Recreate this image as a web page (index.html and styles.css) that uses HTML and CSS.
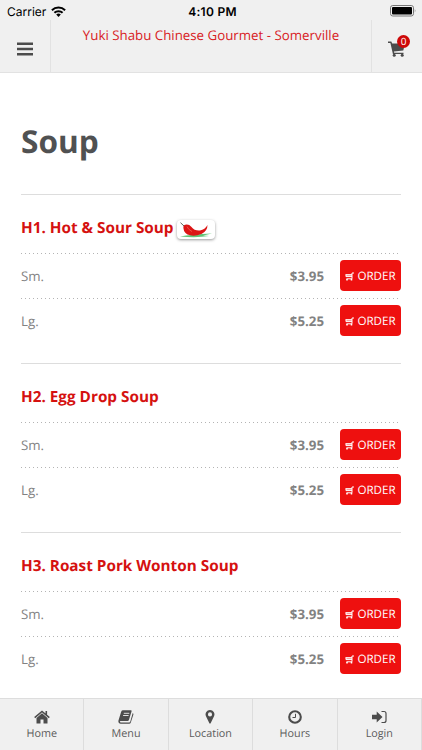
FILE: index.html
```html
<!DOCTYPE html>
<html lang="en">
<head>
<meta charset="utf-8">
<title>Yuki Shabu Chinese Gourmet - Somerville</title>
<link rel="stylesheet" href="styles.css">
</head>
<body>
<svg width="0" height="0" class="defs">
  <symbol id="cart" viewBox="0 0 18 16"><path fill="currentColor" d="M0 .5h3.3l.9 2H17L15.3 9.4 5.900 10.500l.3 1.200h9.300v1.300H4.900L2.400 1.900H0z"/><circle cx="6.200" cy="14.300" r="1.500" fill="currentColor"/><circle cx="14.200" cy="14.300" r="1.500" fill="currentColor"/></symbol>
  <symbol id="mini" viewBox="0 0 9 9"><path fill="none" stroke="currentColor" stroke-width="1" d="M9 1H7v5.800H1.500M.5 2.700H7M1 4.600h6M1 2.700v2"/><path fill="currentColor" opacity=".5" d="M1 2.500h6v2.300H1z"/><circle cx="2" cy="7.700" r=".9" fill="currentColor"/><circle cx="6.500" cy="7.700" r=".9" fill="currentColor"/></symbol>
</svg>
<div class="screen">
  <header class="top">
    <div class="status">
      <div class="carrier">Carrier
        <svg width="15" height="11" viewBox="0 0 15 11"><g fill="none" stroke="#000" stroke-width="2"><path d="M.9 4.2a9.5 9.5 0 0 1 13.2 0"/><path d="M3.4 6.8a5.9 5.9 0 0 1 8.2 0"/></g><path d="M5.2 8.5a3.3 3.3 0 0 1 4.6 0L7.5 10.9z"/></svg>
      </div>
      <div class="time">4:10 PM</div>
      <svg class="battery" width="27" height="12" viewBox="0 0 27 12"><rect x=".5" y=".5" width="23" height="10.5" rx="2.3" fill="none" stroke="#777"/><rect x="2" y="2" width="20" height="7.5" rx="1"/><path d="M24.8 4q1.3 1.7 0 3.5z" fill="#777"/></svg>
    </div>
    <div class="bar">
      <div class="side left"><svg width="16" height="14" viewBox="0 0 16 14"><path stroke="#4c4c4c" stroke-width="2.6" d="M0 1.8h16M0 7h16M0 12.2h16"/></svg></div>
      <div class="title">Yuki Shabu Chinese Gourmet - Somerville</div>
      <div class="side right"><svg width="18" height="16"><use href="#cart"/></svg><span class="badge">0</span></div>
    </div>
  </header>
  <main>
    <h1>Soup</h1>
    <section>
      <h2>H1. Hot &amp; Sour Soup
        <span class="spicy"><svg width="34" height="17" viewBox="0 0 34 17"><path d="M1 15.500Q12 13.500 33 12.500L24 14.500q4 0 6 .500Q18 17 1 15.500z" fill="#62c477"/><path d="M4.500 4.500Q9 2 12.500 6q3 4 8.500 3.500 5-1 7.500-5.500 0 6-6 9-8 3-14 .500Q3.500 10.500 4.500 4.500z" fill="#dc1515"/><path d="M8 5.500q1 3 5 5" stroke="#f04f45" fill="none"/><path d="M1.500 1.700 5 5" stroke="#5b6657" stroke-width="1" fill="none"/></svg></span>
      </h2>
      <div class="row"><span>Sm.</span><b>$3.95</b><a class="order"><svg width="9" height="9"><use href="#mini"/></svg>ORDER</a></div>
      <div class="row"><span>Lg.</span><b>$5.25</b><a class="order"><svg width="9" height="9"><use href="#mini"/></svg>ORDER</a></div>
    </section>
    <section>
      <h2>H2. Egg Drop Soup</h2>
      <div class="row"><span>Sm.</span><b>$3.95</b><a class="order"><svg width="9" height="9"><use href="#mini"/></svg>ORDER</a></div>
      <div class="row"><span>Lg.</span><b>$5.25</b><a class="order"><svg width="9" height="9"><use href="#mini"/></svg>ORDER</a></div>
    </section>
    <section>
      <h2>H3. Roast Pork Wonton Soup</h2>
      <div class="row"><span>Sm.</span><b>$3.95</b><a class="order"><svg width="9" height="9"><use href="#mini"/></svg>ORDER</a></div>
      <div class="row"><span>Lg.</span><b>$5.25</b><a class="order"><svg width="9" height="9"><use href="#mini"/></svg>ORDER</a></div>
    </section>
  </main>
  <nav>
    <a><svg width="16" height="14" viewBox="0 0 16 14"><path d="M8 3.300 13.500 8v5.500H9.500V9.500h-3v4h-4V8z"/><path d="M.7 7.600 8 1.500l7.300 6.100M12.300 1v4" fill="none" stroke="#4c4c4c" stroke-width="1.600"/></svg>Home</a>
    <a><svg width="16" height="14" viewBox="0 0 16 14"><path d="M4.700.3h8.200q1 0 .7 1l-2.700 8.700q-.3 1-1.400 1H2.700q-1 0-.8.800t1 .7h8.300q.8 0 1.100-.9L14.700 3q1 .5.700 1.500l-2.600 8q-.4 1.200-1.700 1.200H2.800Q0 13.500.4 10.800L3 2.200Q3.400.5 4.700.3z"/><path d="M5.800 3.300h5.500M5.100 5.500h5.500" stroke="#f0f0f0" stroke-width=".9"/></svg>Menu</a>
    <a><svg width="10" height="15" viewBox="0 0 10 15"><path fill-rule="evenodd" d="M5 0a4.700 4.700 0 0 1 4.300 6.700L5.800 14q-.8 1.200-1.600 0L.7 6.700A4.700 4.700 0 0 1 5 0zm0 2.500a2.200 2.200 0 1 0 0 4.400 2.200 2.200 0 0 0 0-4.400z"/></svg>Location</a>
    <a><svg width="14" height="14" viewBox="0 0 14 14"><circle cx="7" cy="7" r="5.800" fill="none" stroke="#4c4c4c" stroke-width="2.100"/><path d="M7.500 3.800v3.700h-3" fill="none" stroke="#4c4c4c"/></svg>Hours</a>
    <a><svg width="15" height="14" viewBox="0 0 15 14"><path d="M0 4.700h4.700V1.500l5.800 5.500-5.800 5.500V9.300H0z"/><path d="M9.500 1.500H12q2 0 2 2v7q0 2-2 2H9.500" fill="none" stroke="#4c4c4c" stroke-width="1.200"/></svg>Login</a>
  </nav>
</div>
</body>
</html>
```
FILE: styles.css
```css
* { box-sizing: border-box; }
body { margin: 0; background: #fff; font-family: "Open Sans", sans-serif; text-rendering: geometricPrecision; }
.defs { display: none; }
.screen { width: 422px; height: 750px; display: flex; flex-direction: column; overflow: hidden; }
.top { height: 73px; flex: none; background: #f0f0f0; border-bottom: 1px solid #e2e2e2; }
.status { height: 20px; padding: 2px 5px 0 7px; display: grid; grid-template-columns: 1fr auto 1fr; align-items: center; color: #000; font-family: Inter, sans-serif; font-size: 12px; line-height: 17px; }
.carrier { display: flex; gap: 5px; align-items: center; }
.time { font-weight: 600; letter-spacing: .3px; padding-left: 1px; }
.battery { justify-self: end; margin-top: -1px; }
.bar { height: 52px; display: flex; }
.side { width: 51px; display: flex; align-items: center; justify-content: center; position: relative; color: #4c4c4c; }
.left { border-right: 1px solid #e2e2e2; padding-top: 5px; }
.right { border-left: 1px solid #e2e2e2; padding-top: 6px; }
.badge { position: absolute; left: 25px; top: 15px; width: 13px; height: 13px; border-radius: 50%; background: #cd0808; color: #fff; font-size: 10px; line-height: 13px; text-align: center; }
.title { flex: 1; padding-top: 5px; text-align: center; color: #d8211f; font-size: 13.3px; line-height: 20px; white-space: nowrap; }
main { flex: 1; padding: 0 21px; overflow: hidden; }
h1 { margin: 0; height: 121px; padding-top: 45px; font-size: 31.6px; line-height: 48px; color: #505152; }
section { height: 169px; border-top: 1px solid #ddd; }
h2 { margin: 0; height: 58px; padding-top: 8px; display: flex; align-items: center; gap: 3px; color: #d51110; font-size: 15.3px; line-height: 22px; white-space: nowrap; }
.spicy { width: 38px; height: 19px; margin-top: 2px; padding: 1px 2px; border-radius: 4px; background: #fff; box-shadow: 0 1px 3px #999; }
.spicy svg { display: block; }
.row { height: 45px; display: grid; grid-template-columns: 1fr auto 61px; column-gap: 16px; align-items: center; color: #828282; font-size: 13.3px; background: repeating-linear-gradient(90deg, #b4b4b4 0 1px, transparent 1px 4px) 0 0 / 379px 1px no-repeat; }
.row span, .row b { padding-top: 1px; }
.order { height: 31px; padding-top: 1px; border-radius: 4px; background: #ee100f; color: #fff; display: flex; align-items: center; justify-content: center; gap: 3px; font-size: 11.6px; }
nav { height: 52px; flex: none; display: grid; grid-template-columns: repeat(5, 1fr); background: #f0f0f0; border-top: 1px solid #ddd; }
nav a { border-right: 1px solid #ddd; padding-top: 11px; display: flex; flex-direction: column; align-items: center; color: #5c5c5c; font-size: 10.8px; line-height: 16px; }
nav svg { height: 14px; margin-bottom: 2px; fill: #4c4c4c; }
```
